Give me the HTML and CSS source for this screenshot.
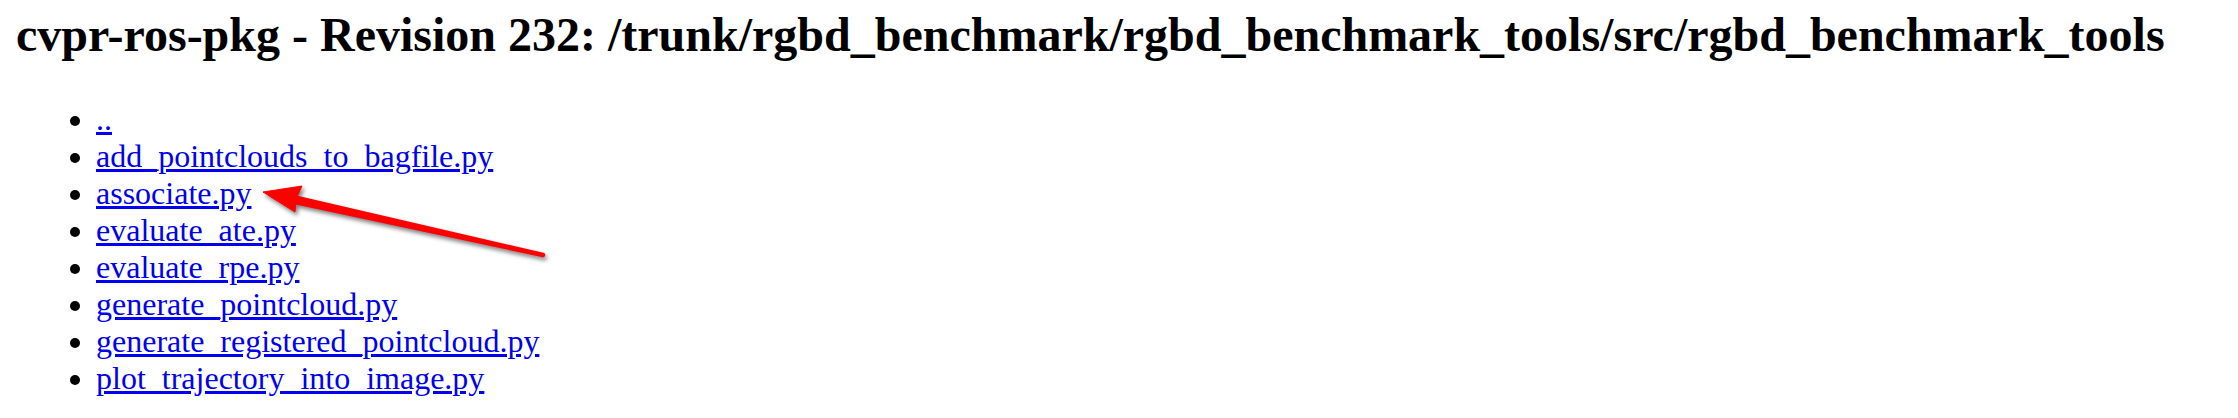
FILE: index.html
```html
<!DOCTYPE html>
<html>
<head>
<meta charset="utf-8">
<title>cvpr-ros-pkg - Revision 232: /trunk/rgbd_benchmark/rgbd_benchmark_tools/src/rgbd_benchmark_tools</title>
<link rel="stylesheet" href="styles.css">
</head>
<body>
<h1 class="title">cvpr-ros-pkg - Revision 232: /trunk/rgbd_benchmark/rgbd_benchmark_tools/src/rgbd_benchmark_tools</h1>
<ul class="listing">
<li><a href="#">..</a></li>
<li><a href="#">add_pointclouds_to_bagfile.py</a></li>
<li><a href="#">associate.py</a></li>
<li><a href="#">evaluate_ate.py</a></li>
<li><a href="#">evaluate_rpe.py</a></li>
<li><a href="#">generate_pointcloud.py</a></li>
<li><a href="#">generate_registered_pointcloud.py</a></li>
<li><a href="#">plot_trajectory_into_image.py</a></li>
</ul>
<svg class="annotation" width="2238" height="418" viewBox="0 0 2238 418" xmlns="http://www.w3.org/2000/svg">
  <g class="arrow">
    <path d="M543,255 L297,198 L295,202 Z" fill="#ff0000" stroke="#ff0000" stroke-width="4.5" stroke-linejoin="round" stroke-linecap="round"/>
    <polygon points="263,192 302,186 296,199 295,212" fill="#ff0000" stroke="#ff0000" stroke-width="1" stroke-linejoin="round"/>
  </g>
</svg>
</body>
</html>
```

FILE: styles.css
```css
html, body {
  margin: 0;
  padding: 0;
  background: #ffffff;
}
body {
  font-family: "Liberation Serif", "Times New Roman", serif;
  font-size: 32px;
  color: #000000;
  padding: 7px 16px 0 16px;
  position: relative;
}
.title {
  font-size: 48px;
  font-weight: bold;
  margin: 0 0 39px 0;
  line-height: normal;
  white-space: nowrap;
}
.listing {
  margin: 0;
  padding-left: 80px;
  list-style: disc;
}
.listing li {
  line-height: normal;
}
.listing a {
  color: #0000ee;
  text-decoration: underline;
}
.annotation {
  position: absolute;
  left: 0;
  top: 0;
  pointer-events: none;
}
.arrow {
  filter: drop-shadow(2px 3px 2px rgba(0, 0, 0, 0.5));
}
```
